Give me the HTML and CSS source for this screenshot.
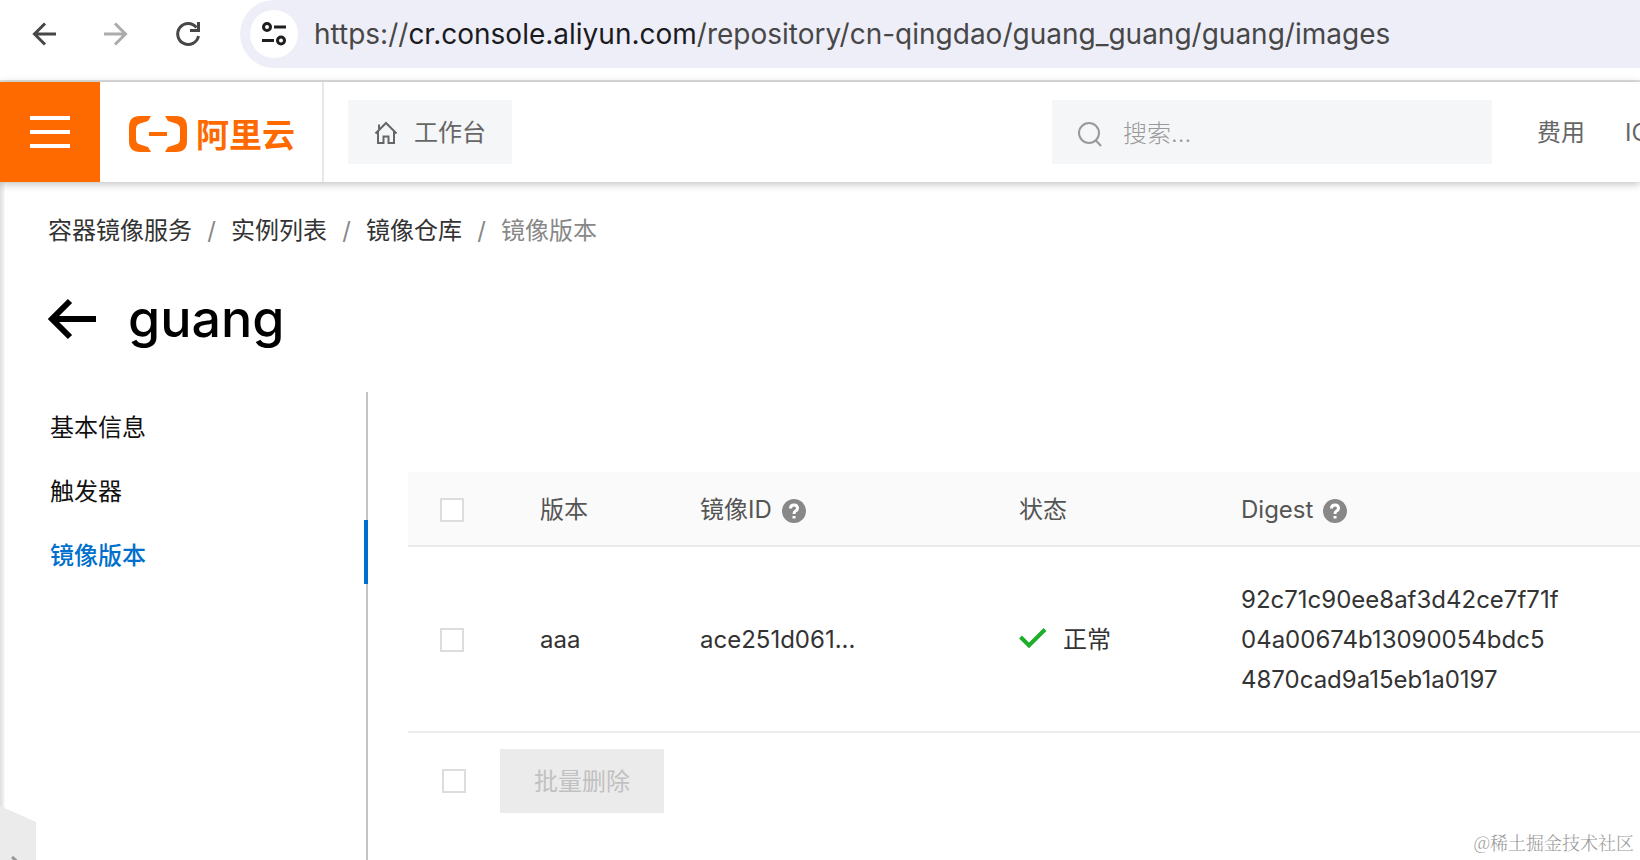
FILE: index.html
```html
<!DOCTYPE html>
<html lang="zh-CN">
<head>
<meta charset="utf-8">
<title>镜像版本 - guang</title>
<link rel="stylesheet" href="styles.css">
</head>
<body>
<div class="browser-bar">
  <button class="nav-btn" aria-label="后退"><svg viewBox="0 0 24 24"><path d="M24 12H3M13 1.500L2.500 12L13 22.500"/></svg></button>
  <button class="nav-btn nav-btn-off" aria-label="前进"><svg viewBox="0 0 24 24"><path d="M0 12H21M11 1.500L21.500 12L11 22.500"/></svg></button>
  <button class="nav-btn" aria-label="刷新"><svg viewBox="0 0 24 24"><path d="M20.500 5.500A10.500 10.500 0 1 0 22.500 14M14 8.500H22.500V0"/></svg></button>
  <div class="address">
    <button class="site-info" aria-label="网站信息"><svg viewBox="0 0 24 24"><circle cx="5" cy="5" r="3.500"/><path d="M12 5H24M0 18.500H12"/><circle cx="19" cy="18.500" r="3.500"/></svg></button>
    <span class="url">https://<b>cr.console.aliyun.com</b>/repository/cn-qingdao/guang_guang/guang/images</span>
  </div>
</div>
<header class="topbar">
  <button class="menu" aria-label="菜单"><span></span><span></span><span></span></button>
  <a class="logo" href="#">
    <svg viewBox="0 0 58 36"><path d="M22 0H11Q0 0 0 11V25Q0 36 11 36H22L19 31L11 28.500Q7 27.500 7 23V13Q7 8.500 11 7.500L19 5ZM36 0H47Q58 0 58 11V25Q58 36 47 36H36L39 31L47 28.500Q51 27.500 51 23V13Q51 8.500 47 7.500L39 5ZM20 16H38V20H20Z"/></svg>
    <span>阿里云</span>
  </a>
  <button class="workbench"><svg viewBox="0 0 24 24"><path d="M1.500 12.500L12 2L22.500 12.500M4 10.500V22H9.500V15.500H14.500V22H20V10.500M5 8V3.500"/></svg>工作台</button>
  <label class="search"><svg viewBox="0 0 24 24"><circle cx="11" cy="11" r="10"/><path d="M17.500 18L23 24"/></svg><input type="text" placeholder="搜索..." aria-label="搜索"></label>
  <nav class="top-links"><a href="#">费用</a><a href="#">ICP</a></nav>
</header>
<main class="page">
  <nav class="crumbs"><a href="#">容器镜像服务</a><i>/</i><a href="#">实例列表</a><i>/</i><a href="#">镜像仓库</a><i>/</i><span>镜像版本</span></nav>
  <div class="heading">
    <a href="#" aria-label="返回"><svg viewBox="0 0 48 40"><path d="M48 20H5M22 2L4 20L22 38"/></svg></a>
    <h1>guang</h1>
  </div>
  <div class="columns">
    <nav class="side"><a href="#">基本信息</a><a href="#">触发器</a><a class="current" href="#">镜像版本</a></nav>
    <section class="content">
      <table>
        <colgroup><col class="c-check"><col class="c-tag"><col class="c-id"><col class="c-state"><col></colgroup>
        <thead><tr>
          <th><input type="checkbox" aria-label="全选"></th>
          <th>版本</th>
          <th>镜像ID<svg class="help" viewBox="0 0 24 24"><circle cx="12" cy="12" r="12"/><path d="M8.500 9.500Q8.500 6 12 6T15.500 9.200Q15.500 11 13.500 12Q12 12.800 12 15M12 17V19.500"/></svg></th>
          <th>状态</th>
          <th>Digest<svg class="help" viewBox="0 0 24 24"><circle cx="12" cy="12" r="12"/><path d="M8.500 9.500Q8.500 6 12 6T15.500 9.200Q15.500 11 13.500 12Q12 12.800 12 15M12 17V19.500"/></svg></th>
        </tr></thead>
        <tbody><tr>
          <td><input type="checkbox" aria-label="选择 aaa"></td>
          <td>aaa</td>
          <td>ace251d061...</td>
          <td><svg class="ok" viewBox="0 0 28 20"><path d="M1.500 9L10 17.500L26 1.500"/></svg>正常</td>
          <td>92c71c90ee8af3d42ce7f71f<br>04a00674b13090054bdc5<br>4870cad9a15eb1a0197</td>
        </tr></tbody>
      </table>
      <div class="batch"><input type="checkbox" aria-label="全选"><button disabled>批量删除</button></div>
    </section>
  </div>
</main>
<button class="drawer" aria-label="展开"><svg viewBox="0 0 36 54"><path class="drawer-face" d="M0 0L36 16V54H0Z"/><path class="drawer-arrow" d="M12 51L20 58"/></svg></button>
<div class="watermark">@稀土掘金技术社区</div>
</body>
</html>
```
FILE: styles.css
```css
* { box-sizing: border-box; }
body {
  margin: 0;
  height: 100vh;
  overflow: hidden;
  display: flex;
  flex-direction: column;
  background: #fff;
  color: #333;
  font: 24px/40px Inter, "Noto Sans CJK SC", sans-serif;
}
a { color: inherit; text-decoration: none; }
button { border: 0; padding: 0; background: none; font: inherit; color: inherit; }
svg { display: block; fill: none; stroke: currentColor; flex: none; overflow: visible; }

.browser-bar {
  flex: none;
  display: flex;
  align-items: flex-start;
  height: 82px;
  padding-left: 32px;
  border-bottom: 2px solid #dfdfdf;
}
.nav-btn { width: 24px; height: 68px; margin-right: 48px; display: flex; align-items: center; color: #474747; }
.nav-btn svg { width: 24px; height: 24px; stroke-width: 3; }
.nav-btn-off { color: #acacac; }
.address {
  flex: 1;
  display: flex;
  align-items: center;
  gap: 16px;
  height: 68px;
  margin-left: -8px;
  padding-left: 10px;
  background: #eeeef8;
  border-radius: 34px 0 0 34px;
}
.site-info { width: 48px; height: 48px; border-radius: 50%; background: #fff; display: grid; place-items: center; color: #1f1f1f; }
.site-info svg { width: 24px; height: 24px; stroke-width: 3; }
.url { font-size: 28px; color: #474747; white-space: nowrap; }
.url b { font-weight: 400; color: #1b1b1f; }

.topbar {
  flex: none;
  position: relative;
  z-index: 1;
  display: flex;
  align-items: center;
  height: 100px;
  background: #fff;
  box-shadow: 0 2px 8px rgba(0, 0, 0, .25);
  color: #666;
}
.menu {
  width: 100px;
  height: 100px;
  background: #ff6a00;
  display: flex;
  flex-direction: column;
  align-items: center;
  justify-content: center;
  gap: 10px;
}
.menu span { width: 40px; height: 4px; background: #fff; }
.logo {
  display: flex;
  align-items: center;
  gap: 9px;
  width: 224px;
  height: 100px;
  padding: 4px 0 0 29px;
  border-right: 2px solid #e8e8e8;
  color: #ff6a00;
  font-size: 33px;
  font-weight: 700;
}
.logo svg { width: 58px; height: 36px; fill: currentColor; stroke: none; }
.logo span { padding-top: 2px; }
.workbench {
  display: flex;
  align-items: center;
  justify-content: center;
  gap: 16px;
  width: 164px;
  height: 64px;
  margin-left: 24px;
  padding-top: 2px;
  background: #f5f6f7;
}
.workbench svg { width: 24px; height: 24px; stroke-width: 2; }
.search {
  display: flex;
  align-items: center;
  gap: 21px;
  width: 440px;
  height: 64px;
  margin-left: auto;
  padding: 3px 0 0 26px;
  background: #f5f6f7;
}
.search svg { width: 24px; height: 24px; color: #999; stroke-width: 2; }
.search input { flex: 1; min-width: 0; border: 0; padding: 0; background: none; font: inherit; font-weight: 300; }
.search input::placeholder { color: #999; opacity: 1; }
.top-links { display: flex; gap: 40px; width: 148px; padding: 2px 0 0 45px; white-space: nowrap; overflow: hidden; }

.page {
  flex: 1;
  display: flex;
  flex-direction: column;
  padding: 29px 0 0 48px;
  background: linear-gradient(to right, #dedede, #f2f2f2 4px, #fff 5px);
}
.crumbs { display: flex; color: #333; }
.crumbs i { width: 39px; text-align: center; font-style: normal; color: #888; }
.crumbs span { color: #888; }
.heading { display: flex; align-items: center; gap: 32px; height: 80px; margin-top: 28px; color: #000; }
.heading svg { width: 48px; height: 40px; stroke-width: 6; }
h1 { margin: 0; font-size: 52px; line-height: 80px; font-weight: 500; }
.columns { flex: 1; display: flex; margin-top: 33px; }
.side { flex: none; width: 320px; border-right: 2px solid #c4c4c4; color: #111; }
.side a { display: block; height: 64px; margin-right: -2px; padding-left: 2px; line-height: 72px; }
.side .current { color: #0070cc; font-weight: 500; border-right: 4px solid #0070cc; }
.content { flex: 1; min-width: 0; padding: 80px 0 0 40px; }

table { width: 100%; table-layout: fixed; border-collapse: separate; border-spacing: 0; }
.c-check { width: 100px; }
.c-tag { width: 160px; }
.c-id { width: 319px; }
.c-state { width: 222px; }
th, td { padding: 33px 0 31px 32px; text-align: left; border-bottom: 2px solid #ebebeb; white-space: nowrap; }
th { padding-top: 18px; padding-bottom: 15px; background: #fafafa; font-weight: 400; color: #555; }
input[type="checkbox"] {
  appearance: none;
  display: block;
  flex: none;
  width: 24px;
  height: 24px;
  margin: 0;
  border: 2px solid #ddd;
  background: #fff;
}
.help { display: inline-block; width: 24px; height: 24px; margin-left: 10px; vertical-align: -5px; stroke: #fff; stroke-width: 3; }
.help circle { fill: #888; stroke: none; }
.ok { display: inline-block; width: 28px; height: 20px; margin-right: 16px; color: #1eae2c; stroke-width: 4; }
.batch { display: flex; align-items: center; gap: 34px; padding: 16px 0 0 34px; }
.batch button { width: 164px; height: 64px; padding-top: 2px; background: #ebebeb; color: #c1c1c1; }

.drawer { position: absolute; left: 0; bottom: 0; width: 36px; height: 54px; overflow: hidden; }
.drawer svg { width: 36px; height: 54px; }
.drawer-face { fill: #ebebeb; stroke: none; }
.drawer-arrow { stroke: #999; stroke-width: 3; }
.watermark { position: absolute; right: 6px; bottom: 6px; font: 300 18px/24px "Noto Serif CJK SC", "Noto Sans CJK SC", serif; color: #999; }
```
